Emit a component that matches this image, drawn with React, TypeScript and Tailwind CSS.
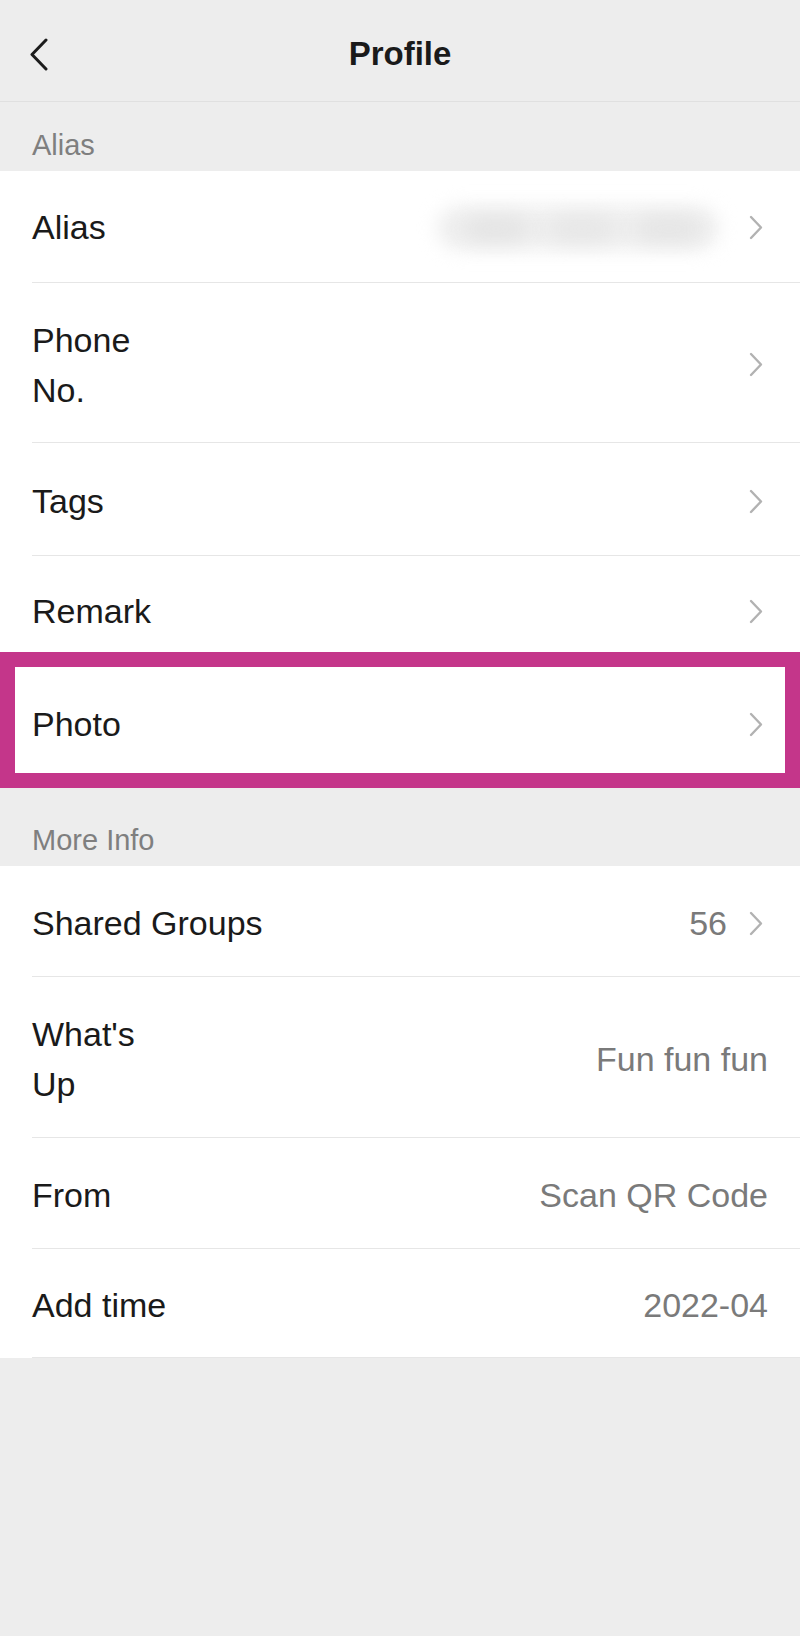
import React from 'react';

const font = { fontFamily: '"Liberation Sans", Arial, sans-serif' };

const Chevron: React.FC = () => (
  <svg width="14" height="25" viewBox="0 0 14 25" className="shrink-0">
    <path d="M2 2 L12 12.5 L2 23" fill="none" stroke="#b2b2b2" strokeWidth="2.4" strokeLinecap="round" strokeLinejoin="round" />
  </svg>
);

const BackArrow: React.FC = () => (
  <svg width="19" height="33" viewBox="0 0 19 33">
    <path d="M17 2 L3 16.5 L17 31" fill="none" stroke="#1c1c1c" strokeWidth="3" strokeLinecap="round" strokeLinejoin="round" />
  </svg>
);

interface RowProps {
  label: React.ReactNode;
  value?: React.ReactNode;
  arrow?: boolean;
  h: string;
}

const Row: React.FC<RowProps> = ({ label, value, arrow, h }) => (
  <div className="bg-white pl-8">
    <div className={`flex items-center justify-between border-b border-[#e6e6e6] pt-[4px] ${h} ${arrow ? 'pr-[37px]' : 'pr-8'}`}>
      <div className="text-[34px] leading-[50px] text-[#1a1a1a]">{label}</div>
      <div className="flex items-center gap-[22px]">
        {value && <span className="text-[34px] text-[#7a7a7a]">{value}</span>}
        {arrow && <Chevron />}
      </div>
    </div>
  </div>
);

const SectionLabel: React.FC<{ text: string; h: string }> = ({ text, h }) => (
  <div className={`flex items-end pl-8 pb-[4px] ${h}`}>
    <span className="text-[29px] text-[#7f7f7f]">{text}</span>
  </div>
);

const BlurredAlias: React.FC = () => (
  <div className="relative h-[60px] w-[290px]">
    <div className="absolute inset-x-[4px] inset-y-[8px] rounded-full bg-[#efefef] blur-[9px]" />
    <div className="absolute left-[32px] top-[20px] h-[22px] w-[62px] rounded-full bg-[#e3e3e3] blur-[10px]" />
    <div className="absolute left-[118px] top-[20px] h-[22px] w-[62px] rounded-full bg-[#e6e6e6] blur-[10px]" />
    <div className="absolute left-[205px] top-[20px] h-[22px] w-[62px] rounded-full bg-[#e4e4e4] blur-[10px]" />
  </div>
);

export default function App() {
  return (
    <div className="min-h-[1636px] bg-[#ededed]" style={font}>
      <header className="relative flex h-[102px] items-center justify-center border-b border-[#e0e0e0] pt-[6px]">
        <button className="absolute left-[29px] top-[38px]">
          <BackArrow />
        </button>
        <h1 className="text-[33px] font-semibold text-[#1a1a1a]">Profile</h1>
      </header>

      <SectionLabel text="Alias" h="h-[69px]" />
      <div className="bg-white pl-8">
        <div className="flex h-[112px] items-center justify-between border-b border-[#e6e6e6] pr-[37px] pt-[2px]">
          <div className="text-[34px] text-[#1a1a1a]">Alias</div>
          <div className="flex items-center gap-[26px]">
            <BlurredAlias />
            <Chevron />
          </div>
        </div>
      </div>
      <Row h="h-[160px]" arrow label={<>Phone<br />No.</>} />
      <Row h="h-[113px]" arrow label="Tags" />
      <div className="bg-white pl-8">
        <div className="flex h-[96px] items-center justify-between pr-[37px] pt-[14px]">
          <div className="text-[34px] text-[#1a1a1a]">Remark</div>
          <Chevron />
        </div>
      </div>
      <div className="border-[15px] border-[#c4368a] bg-white">
        <div className="flex h-[106px] items-center justify-between pl-[17px] pr-[22px] pt-[8px]">
          <div className="text-[34px] text-[#1a1a1a]">Photo</div>
          <Chevron />
        </div>
      </div>

      <SectionLabel text="More Info" h="h-[78px]" />
      <Row h="h-[111px]" arrow value="56" label="Shared Groups" />
      <Row h="h-[161px]" value="Fun fun fun" label={<>What's<br />Up</>} />
      <Row h="h-[111px]" value="Scan QR Code" label="From" />
      <Row h="h-[109px]" value="2022-04" label="Add time" />
    </div>
  );
}
